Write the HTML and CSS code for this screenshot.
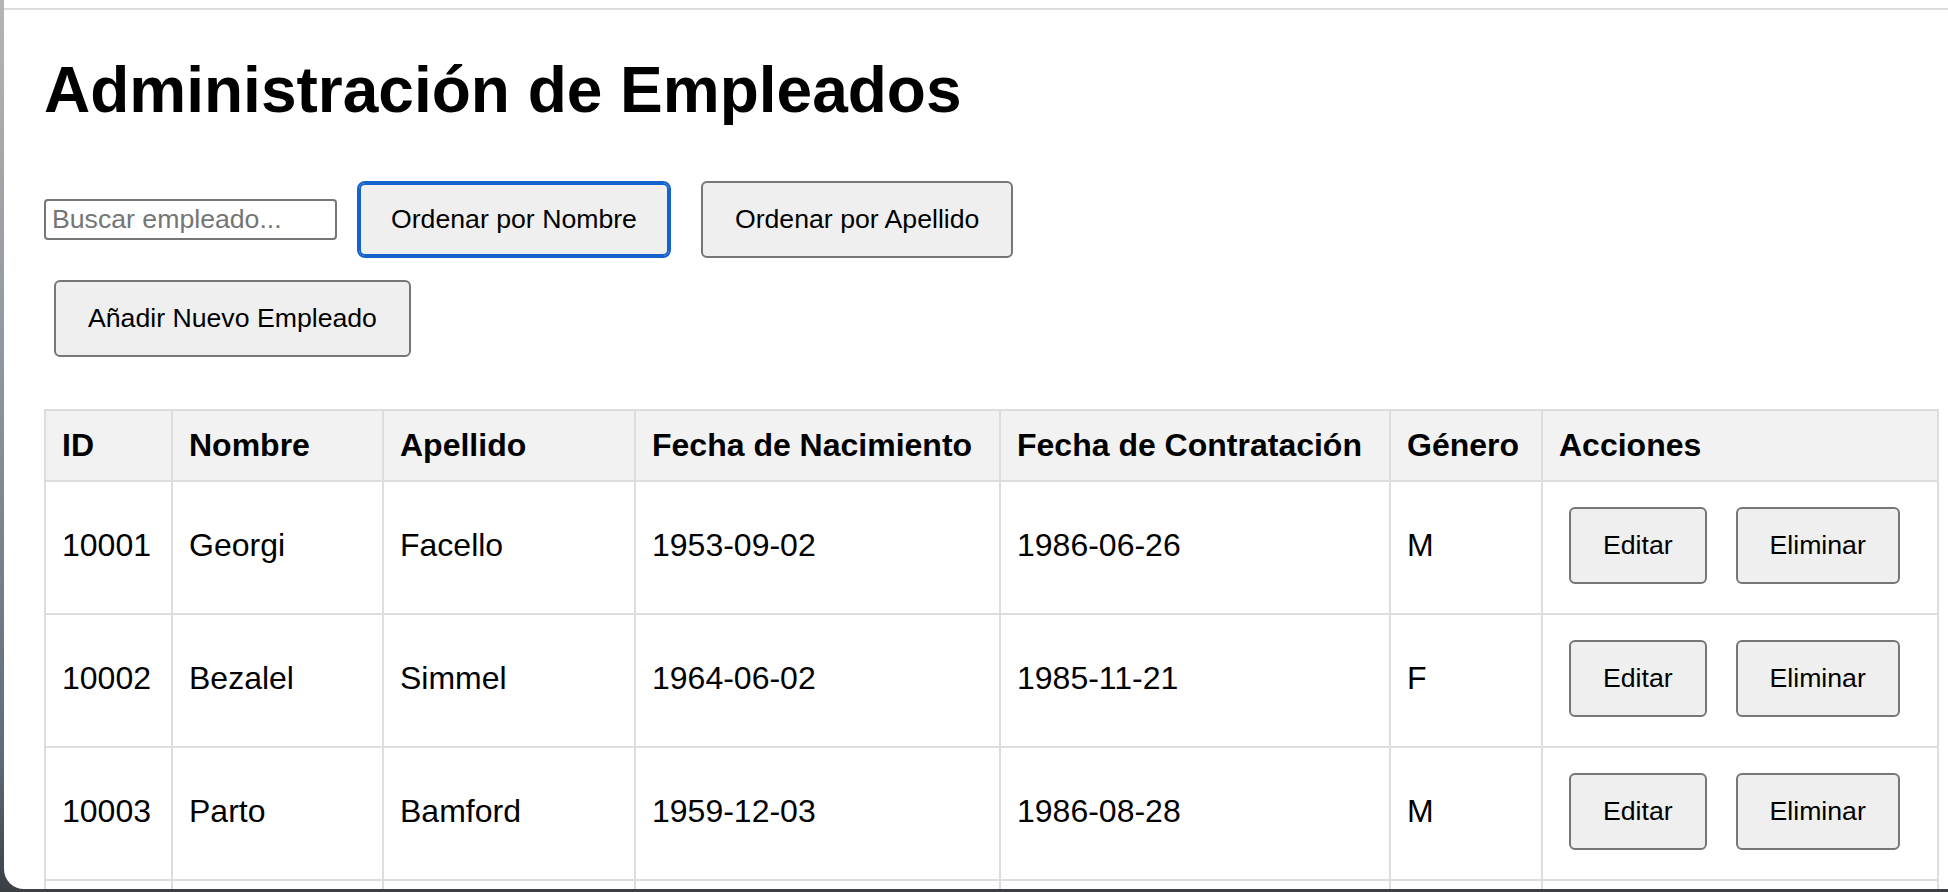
FILE: index.html
```html
<!DOCTYPE html>
<html lang="es">
<head>
  <meta charset="UTF-8">
  <meta name="viewport" content="width=device-width, initial-scale=1.0">
  <title>Administración de Empleados</title>
  <link rel="stylesheet" href="styles.css">
</head>
<body>

  <div class="window">
    <div class="window-top"></div>

    <main class="page">
      <h1>Administración de Empleados</h1>

      <div class="toolbar-row">
        <input type="text" class="search" placeholder="Buscar empleado...">
        <button class="btn is-focused">Ordenar por Nombre</button>
        <button class="btn">Ordenar por Apellido</button>
      </div>
      <div class="toolbar-row">
        <button class="btn">Añadir Nuevo Empleado</button>
      </div>

      <table class="employees">
        <colgroup>
          <col class="col-id">
          <col class="col-name">
          <col class="col-last">
          <col class="col-birth">
          <col class="col-hire">
          <col class="col-gender">
          <col>
        </colgroup>
        <thead>
          <tr>
            <th>ID</th>
            <th>Nombre</th>
            <th>Apellido</th>
            <th>Fecha de Nacimiento</th>
            <th>Fecha de Contratación</th>
            <th>Género</th>
            <th>Acciones</th>
          </tr>
        </thead>
        <tbody>
          <tr>
            <td>10001</td>
            <td>Georgi</td>
            <td>Facello</td>
            <td>1953-09-02</td>
            <td>1986-06-26</td>
            <td>M</td>
            <td class="actions"><button class="btn">Editar</button> <button class="btn">Eliminar</button></td>
          </tr>
          <tr>
            <td>10002</td>
            <td>Bezalel</td>
            <td>Simmel</td>
            <td>1964-06-02</td>
            <td>1985-11-21</td>
            <td>F</td>
            <td class="actions"><button class="btn">Editar</button> <button class="btn">Eliminar</button></td>
          </tr>
          <tr>
            <td>10003</td>
            <td>Parto</td>
            <td>Bamford</td>
            <td>1959-12-03</td>
            <td>1986-08-28</td>
            <td>M</td>
            <td class="actions"><button class="btn">Editar</button> <button class="btn">Eliminar</button></td>
          </tr>
          <!-- next row only peeks in above the window edge -->
          <tr class="row-cut">
            <td></td>
            <td></td>
            <td></td>
            <td></td>
            <td></td>
            <td></td>
            <td></td>
          </tr>
        </tbody>
      </table>
    </main>
  </div>

</body>
</html>
```

FILE: styles.css
```css
* {
  margin: 0;
  padding: 0;
  box-sizing: border-box;
}

body {
  height: 892px;
  padding: 0 0 3px 4px;
  overflow: hidden;
  font-family: 'Liberation Sans', Arial, sans-serif;
  color: #000;
  /* desktop peeking out behind the browser window */
  background: linear-gradient(to bottom, #b4b4b4 0%, #8c939a 45%, #5d6b79 85%, #3b3f44 100%);
}

.window {
  height: 889px;
  background-color: #fff;
  border-bottom-left-radius: 20px;
  overflow: hidden;
}

.window-top {
  height: 10px;
  border-bottom: 2px solid #dcdcdc;
}

.page {
  padding: 0 9px 0 40px;
}

h1 {
  font-size: 64px;
  line-height: 74px;
  font-weight: bold;
  margin: 43px 0 44px;
}

.toolbar-row {
  display: flex;
  align-items: center;
  gap: 10px;
}

.toolbar-row + .toolbar-row {
  margin-top: 2px;
}

.search {
  width: 293px;
  height: 41px;
  padding: 0 6px;
  border: 2px solid #767676;
  border-radius: 4px;
  font-family: 'Liberation Sans', Arial, sans-serif;
  font-size: 26.67px;
  color: #000;
  background-color: #fff;
}

.search::placeholder {
  color: #757575;
}

.btn {
  margin: 10px;
  padding: 20px 32px;
  border: 2px solid #767676;
  border-radius: 6px;
  background-color: #efefef;
  font-family: 'Liberation Sans', Arial, sans-serif;
  font-size: 26.67px;
  line-height: 33px;
  color: #000;
  cursor: pointer;
}

.btn.is-focused {
  border-color: #1463cc;
  border-radius: 8px;
  box-shadow: inset 0 0 0 2px #1463cc;
}

/* Employees table */
.employees {
  width: 100%;
  margin-top: 42px;
  border-collapse: collapse;
  table-layout: fixed;
  font-size: 32px;
}

.col-id { width: 127px; }
.col-name { width: 211px; }
.col-last { width: 252px; }
.col-birth { width: 365px; }
.col-hire { width: 390px; }
.col-gender { width: 152px; }

.employees th,
.employees td {
  border: 2px solid #ddd;
  padding: 15px 16px 19px;
  text-align: left;
  white-space: nowrap;
}

.employees th {
  padding: 16px;
  line-height: 37px;
  background-color: #f2f2f2;
  font-weight: bold;
}

.employees .row-cut td {
  height: 131px;
}
```
